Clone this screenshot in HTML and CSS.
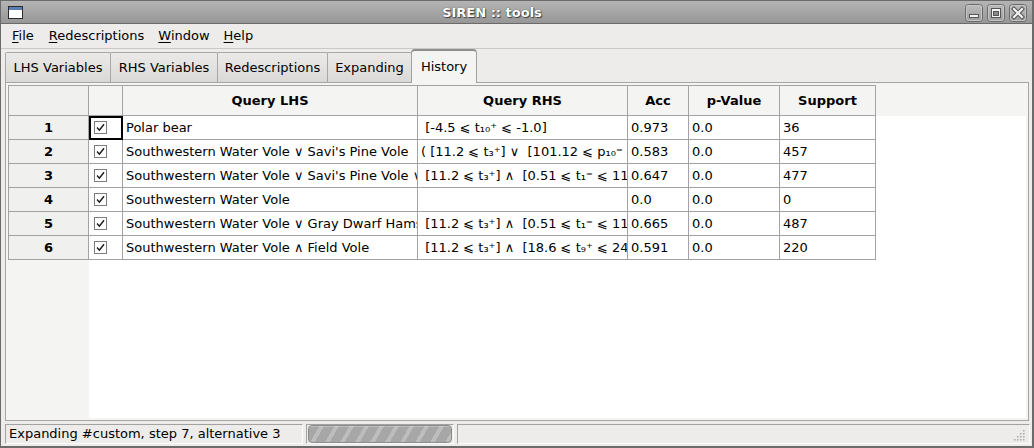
FILE: index.html
```html
<!DOCTYPE html>
<html>
<head>
<meta charset="utf-8">
<link rel="stylesheet" href="styles.css">
</head>
<body>
<div class="window">
  <div class="titlebar">
    <svg class="wicon" width="15" height="13" viewBox="0 0 15 13"><rect x="0.5" y="0.5" width="14" height="12" fill="#fff" stroke="#2b2b2b"/><rect x="1" y="1" width="13" height="3" fill="#5b7db3"/></svg>
    <div class="title">SIREN :: tools</div>
    <div class="wbtns">
      <svg width="18" height="18" viewBox="0 0 18 18"><defs><linearGradient id="bg" x1="0" y1="0" x2="0" y2="1"><stop offset="0" stop-color="#bdbdbd"/><stop offset="1" stop-color="#9c9c9c"/></linearGradient></defs><rect x="0.5" y="0.5" width="17" height="17" rx="3" fill="url(#bg)" stroke="#6a6a6a"/><rect x="1.5" y="1.5" width="15" height="15" rx="2" fill="none" stroke="#c6c6c6"/><rect x="4.5" y="10.5" width="9" height="3" fill="#f2f2f2" stroke="#555"/></svg>
      <svg width="18" height="18" viewBox="0 0 18 18"><rect x="0.5" y="0.5" width="17" height="17" rx="3" fill="url(#bg)" stroke="#6a6a6a"/><rect x="1.5" y="1.5" width="15" height="15" rx="2" fill="none" stroke="#c6c6c6"/><rect x="4.5" y="4.5" width="9" height="9" fill="#f2f2f2" stroke="#555"/><rect x="6.5" y="7.5" width="5" height="4" fill="#8a8a8a" stroke="#555"/></svg>
      <svg width="18" height="18" viewBox="0 0 18 18"><rect x="0.5" y="0.5" width="17" height="17" rx="3" fill="url(#bg)" stroke="#6a6a6a"/><rect x="1.5" y="1.5" width="15" height="15" rx="2" fill="none" stroke="#c6c6c6"/><path d="M5 5 L13 13 M13 5 L5 13" stroke="#555" stroke-width="4.2" stroke-linecap="square"/><path d="M5 5 L13 13 M13 5 L5 13" stroke="#f4f4f4" stroke-width="2.2" stroke-linecap="square"/></svg>
    </div>
  </div>
  <div class="menubar">
    <span class="mi"><u>F</u>ile</span>
    <span class="mi"><u>R</u>edescriptions</span>
    <span class="mi"><u>W</u>indow</span>
    <span class="mi"><u>H</u>elp</span>
  </div>
  <div class="tabstrip">
    <div class="tab t-lhs">LHS Variables</div>
    <div class="tab t-rhs">RHS Variables</div>
    <div class="tab t-red">Redescriptions</div>
    <div class="tab t-exp">Expanding</div>
    <div class="tab t-his active">History</div>
  </div>
  <div class="panel">
    <div class="viewport">
      <div class="grid">
        <div class="c hd rh"></div>
        <div class="c hd"></div>
        <div class="c hd">Query LHS</div>
        <div class="c hd">Query RHS</div>
        <div class="c hd">Acc</div>
        <div class="c hd">p-Value</div>
        <div class="c hd">Support</div>
        <div class="c hdfill"></div>

        <div class="c rh">1</div>
        <div class="c cb focus"><svg class="chk" width="13" height="13" viewBox="0 0 13 13"><rect x="0.5" y="0.5" width="12" height="12" fill="#fff" stroke="#7d7d7d"/><path d="M3 6.6 L5.4 9.2 L10 3.2" fill="none" stroke="#1e1e1e" stroke-width="1.5"/></svg></div>
        <div class="c tx">Polar bear</div>
        <div class="c tx"> [-4.5 ⩽ t₁₀⁺ ⩽ -1.0]</div>
        <div class="c tx">0.973</div>
        <div class="c tx">0.0</div>
        <div class="c tx">36</div>
        <div class="c fill"></div>

        <div class="c rh">2</div>
        <div class="c cb"><svg class="chk" width="13" height="13" viewBox="0 0 13 13"><rect x="0.5" y="0.5" width="12" height="12" fill="#fff" stroke="#7d7d7d"/><path d="M3 6.6 L5.4 9.2 L10 3.2" fill="none" stroke="#1e1e1e" stroke-width="1.5"/></svg></div>
        <div class="c tx">Southwestern Water Vole ∨ Savi's Pine Vole</div>
        <div class="c tx">( [11.2 ⩽ t₃⁺] ∨  [101.12 ⩽ p₁₀⁼ ⩽ 262.4] )</div>
        <div class="c tx">0.583</div>
        <div class="c tx">0.0</div>
        <div class="c tx">457</div>
        <div class="c fill"></div>

        <div class="c rh">3</div>
        <div class="c cb"><svg class="chk" width="13" height="13" viewBox="0 0 13 13"><rect x="0.5" y="0.5" width="12" height="12" fill="#fff" stroke="#7d7d7d"/><path d="M3 6.6 L5.4 9.2 L10 3.2" fill="none" stroke="#1e1e1e" stroke-width="1.5"/></svg></div>
        <div class="c tx">Southwestern Water Vole ∨ Savi's Pine Vole ∨ Field Vole</div>
        <div class="c tx"> [11.2 ⩽ t₃⁺] ∧  [0.51 ⩽ t₁⁼ ⩽ 11.8]</div>
        <div class="c tx">0.647</div>
        <div class="c tx">0.0</div>
        <div class="c tx">477</div>
        <div class="c fill"></div>

        <div class="c rh">4</div>
        <div class="c cb"><svg class="chk" width="13" height="13" viewBox="0 0 13 13"><rect x="0.5" y="0.5" width="12" height="12" fill="#fff" stroke="#7d7d7d"/><path d="M3 6.6 L5.4 9.2 L10 3.2" fill="none" stroke="#1e1e1e" stroke-width="1.5"/></svg></div>
        <div class="c tx">Southwestern Water Vole</div>
        <div class="c tx"></div>
        <div class="c tx">0.0</div>
        <div class="c tx">0.0</div>
        <div class="c tx">0</div>
        <div class="c fill"></div>

        <div class="c rh">5</div>
        <div class="c cb"><svg class="chk" width="13" height="13" viewBox="0 0 13 13"><rect x="0.5" y="0.5" width="12" height="12" fill="#fff" stroke="#7d7d7d"/><path d="M3 6.6 L5.4 9.2 L10 3.2" fill="none" stroke="#1e1e1e" stroke-width="1.5"/></svg></div>
        <div class="c tx">Southwestern Water Vole ∨ Gray Dwarf Hamster</div>
        <div class="c tx"> [11.2 ⩽ t₃⁺] ∧  [0.51 ⩽ t₁⁼ ⩽ 11.8]</div>
        <div class="c tx">0.665</div>
        <div class="c tx">0.0</div>
        <div class="c tx">487</div>
        <div class="c fill"></div>

        <div class="c rh">6</div>
        <div class="c cb"><svg class="chk" width="13" height="13" viewBox="0 0 13 13"><rect x="0.5" y="0.5" width="12" height="12" fill="#fff" stroke="#7d7d7d"/><path d="M3 6.6 L5.4 9.2 L10 3.2" fill="none" stroke="#1e1e1e" stroke-width="1.5"/></svg></div>
        <div class="c tx">Southwestern Water Vole ∧ Field Vole</div>
        <div class="c tx"> [11.2 ⩽ t₃⁺] ∧  [18.6 ⩽ t₉⁺ ⩽ 24.6]</div>
        <div class="c tx">0.591</div>
        <div class="c tx">0.0</div>
        <div class="c tx">220</div>
        <div class="c fill"></div>
      </div>
    </div>
  </div>
  <div class="status">
    <div class="field f1">Expanding #custom, step 7, alternative 3</div>
    <div class="field f2"><div class="progress"></div></div>
    <div class="field f3"><svg class="grip" width="12" height="12" viewBox="0 0 12 12"><g fill="#a9a9a7"><rect x="9" y="1" width="1.5" height="1.5"/><rect x="6" y="4" width="1.5" height="1.5"/><rect x="9" y="4" width="1.5" height="1.5"/><rect x="3" y="7" width="1.5" height="1.5"/><rect x="6" y="7" width="1.5" height="1.5"/><rect x="9" y="7" width="1.5" height="1.5"/><rect x="0" y="10" width="1.5" height="1.5"/><rect x="3" y="10" width="1.5" height="1.5"/><rect x="6" y="10" width="1.5" height="1.5"/><rect x="9" y="10" width="1.5" height="1.5"/></g></svg></div>
  </div>
</div>
</body>
</html>
```
FILE: styles.css
```css
* { box-sizing: border-box; }
html, body { margin: 0; padding: 0; }
body {
  width: 1034px;
  height: 448px;
  overflow: hidden;
  font-family: "DejaVu Sans", sans-serif;
  font-size: 13px;
  color: #000;
  background: #edeceb;
}
.window {
  width: 1034px;
  height: 448px;
  display: flex;
  flex-direction: column;
  border-top: 1px solid #6b6b6b;
  border-left: 1px solid #6b6b6b;
  border-right: 2px solid #6b6b6b;
  border-bottom: 2px solid #6b6b6b;
}
.titlebar {
  height: 23px;
  flex: none;
  display: flex;
  align-items: center;
  background: linear-gradient(#b4b4b4, #979797);
  border-bottom: 1px solid #6a6a6a;
  position: relative;
}
.wicon { margin-left: 7px; margin-top: 1px; flex: none; }
.title {
  flex: 1;
  text-align: center;
  font-weight: bold;
  color: #fff;
  text-shadow: 0 0 1px #333, 1px 1px 1px #444;
  margin-left: -4px;
  margin-top: 1px;
}
.wbtns { display: flex; gap: 4px; margin-right: 5px; margin-top: 1px; }
.wbtns svg { display: block; }
.menubar {
  height: 25px;
  flex: none;
  display: flex;
  align-items: center;
  padding-left: 4px;
  border-bottom: 1px solid #cac9c7;
}
.mi { padding: 0 7px; line-height: 16px; }
.mi:first-child { margin-right: 1px; }
.mi u { text-underline-offset: 2px; }
.tabstrip {
  height: 33px;
  flex: none;
  display: flex;
  align-items: flex-end;
  padding-left: 4px;
  position: relative;
  z-index: 2;
}
.tab {
  height: 30px;
  flex: none;
  display: flex;
  align-items: center;
  justify-content: center;
  border: 1px solid #a9a8a6;
  border-bottom: none;
  border-radius: 2px 2px 0 0;
  background: linear-gradient(#ebeae8, #dad9d7);
  margin-right: -1px;
  white-space: nowrap;
}
.t-lhs { width: 106px; }
.t-rhs { width: 108px; }
.t-red { width: 111px; }
.t-exp { width: 85px; }
.t-his { width: 66px; }
.tab.active {
  height: 34px;
  margin-bottom: -1px;
  padding-bottom: 2px;
  background: #f4f4f2;
  border-color: #a0a09e;
  border-top: 2px solid #8e8e8c;
  border-radius: 4px 4px 0 0;
  position: relative;
}
.panel {
  flex: 1;
  margin: 0 3px 0 4px;
  border: 1px solid #a6a5a3;
  padding: 2px;
  background: #f4f4f2;
  display: flex;
  min-height: 0;
}
.viewport {
  flex: 1;
  background: linear-gradient(to right, #f4f4f2 0, #f4f4f2 81px, #ffffff 81px);
  overflow: hidden;
}
.grid {
  display: grid;
  grid-template-columns: 81px 34px 295px 210px 61px 91px 96px 1fr;
  grid-template-rows: 31px repeat(6, 24px);
}
.c {
  border-right: 1px solid #a3a3a3;
  border-bottom: 1px solid #a3a3a3;
  white-space: pre;
  overflow: hidden;
  display: flex;
  align-items: center;
}
.hd {
  background: #f4f4f2;
  border-top: 1px solid #a3a3a3;
  font-weight: bold;
  justify-content: center;
}
.hd.rh { border-left: 1px solid #a3a3a3; }
.hdfill { background: #f4f4f2; border: none; }
.rh {
  background: #f0f0ee;
  border-left: 1px solid #a3a3a3;
  font-weight: bold;
  justify-content: center;
}
.cb { background: #fff; padding-left: 5px; }
.chk { display: block; }
.focus { outline: 2px solid #000; outline-offset: -2px; }
.tx { background: #fff; padding-left: 3px; }
.fill { border: none; background: transparent; }
.status {
  height: 25px;
  flex: none;
  display: flex;
  align-items: center;
  padding: 0 2px 0 4px;
  gap: 3px;
}
.field {
  height: 20px;
  border: 1px solid;
  border-color: #a2a2a0 #fbfbfa #fbfbfa #a2a2a0;
  display: flex;
  align-items: center;
}
.f1 { width: 298px; padding-left: 3px; white-space: nowrap; }
.f2 { width: 148px; padding: 1px; }
.f3 { flex: 1; justify-content: flex-end; align-items: flex-end; padding: 0 3px 2px 0; }
.grip { display: block; }
.progress {
  width: 144px;
  height: 18px;
  border: 1px solid #8b8b8b;
  border-radius: 4px;
  background: repeating-linear-gradient(120deg, #a7a7a7 0, #a7a7a7 9px, #bdbdbd 9px, #bdbdbd 13px);
  box-shadow: inset 0 1px 0 rgba(255,255,255,0.25);
}
```
